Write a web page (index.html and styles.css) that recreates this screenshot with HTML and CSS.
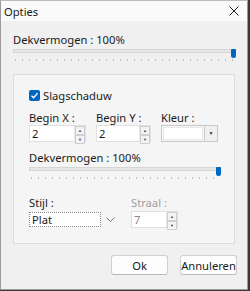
FILE: index.html
```html
<!DOCTYPE html>
<html lang="nl">
<head>
    <meta charset="UTF-8">
    <title>Opties</title>
    <link rel="stylesheet" href="styles.css">
</head>
<body>
    <div class="window">
        <div class="titlebar">
            <span class="title">Opties</span>
            <svg class="close" width="10" height="10" viewBox="0 0 10 10">
                <path d="M0.5 0.5 L9.5 9.5 M9.5 0.5 L0.5 9.5" stroke="#222" stroke-width="1"/>
            </svg>
        </div>

        <div class="content">
            <div class="label top-label">Dekvermogen : 100%</div>
            <div class="slider wide">
                <div class="track"></div>
                <div class="thumb"></div>
                <div class="ticks"></div>
            </div>

            <div class="group">
                <label class="check">
                    <span class="box">
                        <svg width="9" height="9" viewBox="0 0 9 9">
                            <path d="M1.5 4.8 L3.6 6.8 L7.6 2.2" stroke="#fff" stroke-width="1.3" fill="none"/>
                        </svg>
                    </span>
                    Slagschaduw
                </label>

                <div class="row fields">
                    <div class="field">
                        <div class="label">Begin X :</div>
                        <div class="spin">
                            <span class="value">2</span>
                            <span class="arrows"><i>▲</i><i>▼</i></span>
                        </div>
                    </div>
                    <div class="field">
                        <div class="label">Begin Y :</div>
                        <div class="spin second">
                            <span class="value">2</span>
                            <span class="arrows"><i>▲</i><i>▼</i></span>
                        </div>
                    </div>
                    <div class="field">
                        <div class="label">Kleur :</div>
                        <div class="color">
                            <span class="swatch"></span>
                            <span class="drop">▼</span>
                        </div>
                    </div>
                </div>

                <div class="label sub-label">Dekvermogen : 100%</div>
                <div class="slider narrow">
                    <div class="track"></div>
                    <div class="thumb"></div>
                    <div class="ticks"></div>
                </div>

                <div class="row styles">
                    <div class="field">
                        <div class="label">Stijl :</div>
                        <div class="combo">
                            <span class="combo-text">Plat</span>
                            <svg class="chev" width="9" height="5" viewBox="0 0 9 5">
                                <path d="M0.5 0.5 L4.5 4.5 L8.5 0.5" stroke="#777" fill="none"/>
                            </svg>
                        </div>
                    </div>
                    <div class="field disabled">
                        <div class="label">Straal :</div>
                        <div class="spin small">
                            <span class="value">7</span>
                            <span class="arrows"><i>▲</i><i>▼</i></span>
                        </div>
                    </div>
                </div>
            </div>

            <div class="buttons">
                <button class="btn">Ok</button>
                <button class="btn">Annuleren</button>
            </div>
        </div>
    </div>
</body>
</html>
```

FILE: styles.css
```css
body {
    margin: 0;
    background: #3a3a3a;
    font-family: "Noto Sans", "Open Sans", sans-serif;
    font-size: 11.2px;
    color: #1a1a1a;
}

.window {
    width: 246px;
    height: 288px;
    background: #f0f0f0;
    border: 1px solid #9a9a9a;
    border-top-color: #bbb;
}

.titlebar {
    height: 20px;
    background: #fafafa;
    display: flex;
    align-items: center;
    justify-content: space-between;
    padding: 0 8px 0 3px;
}

.content {
    padding: 0 11px 0 12px;
}

.label {
    line-height: 14px;
}

.top-label {
    margin-top: 12px;
}

.slider {
    position: relative;
    height: 14px;
}

.slider .track {
    height: 2px;
    margin-top: 2px;
    background: #e6e6e6;
    border: 1px solid #d6d6d6;
}

.slider .thumb {
    position: absolute;
    right: 0;
    top: 0;
    width: 5px;
    height: 9px;
    background: #0067c0;
    border-radius: 1px 1px 3px 3px;
}

.slider .ticks {
    height: 2px;
    margin: 6px 2px 0 2px;
    background: repeating-linear-gradient(to right, #c0c0c0 0 1px, transparent 1px 7px);
}

.slider.wide {
    width: 223px;
}

.group {
    margin-top: 11px;
    width: 222px;
    height: 170px;
    box-sizing: border-box;
    border: 1px solid #dcdcdc;
    background: #f5f5f5;
    padding: 13px 0 0 15px;
}

.check {
    display: flex;
    align-items: center;
    gap: 3px;
    height: 15px;
}

.box {
    width: 11px;
    height: 11px;
    border-radius: 2px;
    background: #0067c0;
    display: flex;
    align-items: center;
    justify-content: center;
}

.row {
    display: flex;
}

.fields {
    margin-top: 8px;
    gap: 10px;
}

.spin, .color, .combo {
    display: flex;
    height: 17px;
    box-sizing: border-box;
}

.spin {
    width: 57px;
    background: #fff;
    border: 1px solid #e0e0e0;
}

.spin.second {
    width: 55px;
}

.spin .value {
    flex: 1;
    padding-left: 2px;
    line-height: 15px;
}

.arrows {
    width: 10px;
    display: flex;
    flex-direction: column;
    border-left: 1px solid #e6e6e6;
}

.arrows i {
    flex: 1;
    font-style: normal;
    font-size: 4px;
    line-height: 7px;
    text-align: center;
    color: #444;
    background: #f3f3f3;
    border: 1px solid #cfcfcf;
}

.color {
    width: 57px;
    border: 1px solid #c8c8c8;
    background: #f8f8f8;
}

.color .swatch {
    flex: 1;
    background: #fff;
    border: 1px solid #e8e8e8;
    margin: 1px;
}

.color .drop {
    width: 12px;
    font-size: 5px;
    line-height: 15px;
    text-align: center;
    border-left: 1px solid #ccc;
    background: #f0f0f0;
    color: #333;
}

.sub-label {
    margin-top: 9px;
}

.slider.narrow {
    width: 192px;
}

.styles {
    margin-top: 15px;
    gap: 15px;
}

.combo {
    width: 87px;
    align-items: center;
    margin-top: 1px;
}

.combo-text {
    width: 72px;
    height: 15px;
    line-height: 13px;
    padding-left: 2px;
    box-sizing: border-box;
    background: #fff;
    border: 1px dotted #8a8a8a;
}

.chev {
    margin-left: 5px;
}

.disabled .label {
    color: #a0a0a0;
}

.spin.small {
    width: 47px;
    color: #888;
    margin-top: 1px;
}

.buttons {
    display: flex;
    justify-content: flex-end;
    gap: 12px;
    margin-top: 11px;
    width: 224px;
}

.btn {
    width: 57px;
    height: 20px;
    font-family: inherit;
    font-size: 11.2px;
    background: #fdfdfd;
    border: 1px solid #d0d0d0;
    border-bottom-color: #b8b8b8;
    border-radius: 3px;
    padding: 0;
    color: #1a1a1a;
}
```
